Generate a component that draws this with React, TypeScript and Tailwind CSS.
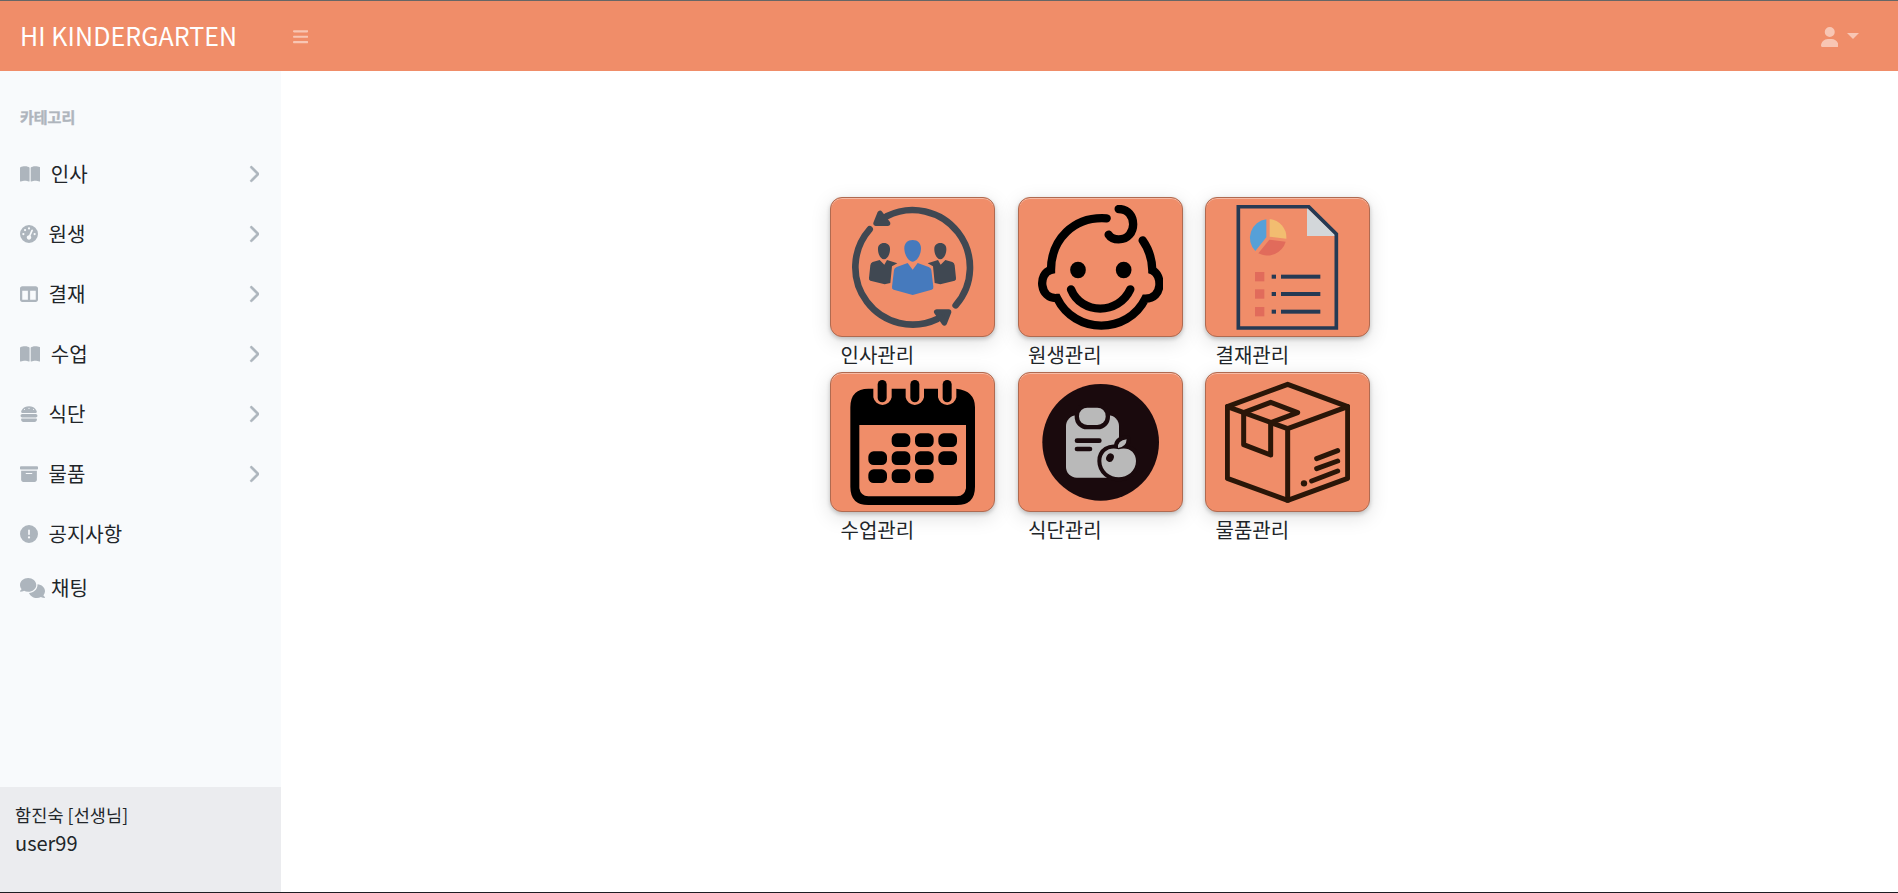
import React from "react";
import {
  FaBars, FaBookOpen, FaBoxArchive, FaBurger, FaChevronRight,
  FaCircleExclamation, FaComments, FaGaugeHigh, FaTableColumns, FaUser,
} from "react-icons/fa6";

type MenuItem = { label: string; icon: React.ReactNode; expandable?: boolean };

const menu: MenuItem[] = [
  { label: "인사", icon: <FaBookOpen className="h-[18px] w-[20.25px]" />, expandable: true },
  { label: "원생", icon: <FaGaugeHigh className="size-[18px]" />, expandable: true },
  { label: "결재", icon: <FaTableColumns className="size-[18px]" />, expandable: true },
  { label: "수업", icon: <FaBookOpen className="h-[18px] w-[20.25px]" />, expandable: true },
  { label: "식단", icon: <FaBurger className="size-[18px]" />, expandable: true },
  { label: "물품", icon: <FaBoxArchive className="size-[18px]" />, expandable: true },
  { label: "공지사항", icon: <FaCircleExclamation className="size-[18px]" /> },
];

function StaffIcon() {
  const dark = "#404852";
  return (
    <svg viewBox="90 45 375 375" className="size-[125px]">
      <g fill="none" stroke={dark} strokeWidth="20" strokeLinecap="round">
        <path d="M149 118A172 172 0 0 0 352 387" />
        <path d="M200 79A172 172 0 0 1 407 346" />
      </g>
      <g fill={dark} stroke={dark} strokeWidth="16" strokeLinejoin="round">
        <path d="M180 70L168 100H203Z" />
        <path d="M350 366H386L373 399Z" />
      </g>
      <g fill={dark}>
        <path d="M192 159C204 159 211 167 210 180C209 195 201 208 192 208C183 208 175 195 174 180C173 167 180 159 192 159Z" />
        <path d="M361 159C373 159 380 167 379 180C378 195 370 208 361 208C352 208 344 195 343 180C342 167 349 159 361 159Z" />
        <path d="M179 210L193 224L201 210L232 220L216 229L211 279L194 283L151 272Q146 270 147 264L151 226Q152 218 158 216Z" />
        <path d="M376 210L362 224L354 210L323 220L339 229L344 279L361 283L404 272Q409 270 408 264L404 226Q403 218 397 216Z" />
      </g>
      <g fill="#467abd">
        <path d="M278 150C294 150 304 161 303 177C302 196 290 215 278 215C266 215 254 196 253 177C252 161 262 150 278 150Z" />
        <path d="M263 219L278 239L293 219L326 231Q333 234 334 240L340 290Q341 297 335 299L278 315L221 299Q215 297 216 290L222 240Q223 234 230 231Z" />
      </g>
    </svg>
  );
}

function ChildIcon() {
  return (
    <svg viewBox="84 45 375 375" className="size-[125px]">
      <g fill="none" stroke="#000" strokeWidth="25" strokeLinecap="round" strokeLinejoin="miter">
        <path d="M290 85C190 78 123 150 123 240C83 249 88 328 141 324C194 434 353 434 406 326C460 326 457 253 427 241C426 202 413 172 398 151" />
        <path d="M326 57C384 57 384 148 326 148Q305 148 296 134" />
        <path d="M183 298C214 375 326 375 361 298" />
      </g>
      <ellipse cx="204" cy="240" rx="23.5" ry="25" />
      <ellipse cx="341" cy="240" rx="23.5" ry="25" />
    </svg>
  );
}

function ReportIcon() {
  return (
    <svg viewBox="90 45 375 375" className="size-[125px]">
      <path d="M336 53V138H424Z" fill="#d3d7da" />
      <path d="M130 50H341L424 132V414H130Z" fill="none" stroke="#253a54" strokeWidth="11" />
      <path d="M214 88A56 56 0 0 0 181 183L214 142Z" fill="#56a0d8" />
      <path d="M224 87A55 55 0 0 1 274 146L224 140Z" fill="#f2bd70" />
      <path d="M223 149L272 155A57 57 0 0 1 190 190Z" fill="#e16b5b" />
      {[260, 312, 365].map((y) => (
        <g key={y}>
          <rect x="180" y={y - 14} width="28" height="28" fill="#e16b5b" />
          <rect x="230" y={y - 6} width="13" height="12" fill="#253a54" />
          <rect x="258" y={y - 6} width="118" height="12" fill="#253a54" />
        </g>
      ))}
    </svg>
  );
}

const days = [
  [215, 205], [285, 205], [355, 205],
  [145, 259], [215, 259], [285, 259], [355, 259],
  [145, 313], [215, 313], [285, 313],
];

function CalendarIcon() {
  return (
    <svg viewBox="90 45 375 375" className="size-[125px]">
      <path
        fillRule="evenodd"
        d="M145 71H160V97A28 28 0 0 0 215 97V71H257V97A28 28 0 0 0 312 97V71H354V97A28 28 0 0 0 409 97V71Q465 77 465 127V365Q465 420 410 420H145Q91 420 91 365V127Q91 71 145 71ZM118 180V370Q122 393 145 394H411Q434 393 438 370V180Z"
      />
      {[173, 271, 368].map((x) => (
        <rect key={x} x={x} y="45" width="27" height="67" rx="13.5" />
      ))}
      {days.map(([x, y]) => (
        <rect key={x + "-" + y} x={x} y={y} width="56" height="41" rx="16" />
      ))}
    </svg>
  );
}

function MealIcon() {
  const dark = "#1a0a0d";
  const apple = "M326 253C300 244 274 259 274 288C274 318 301 337 326 337C352 337 378 318 378 288C378 259 352 244 326 253Z";
  return (
    <svg viewBox="84 45 375 375" className="size-[125px]">
      <circle cx="272" cy="232" r="175" fill={dark} />
      <rect x="168" y="151" width="159" height="187" rx="32" fill="#b9b9b9" />
      <rect x="194" y="115" width="106" height="78" rx="37" fill={dark} />
      <rect x="207" y="128" width="80" height="52" rx="25" fill="#b9b9b9" />
      <path d="M201 227H268M201 252H240" stroke={dark} strokeWidth="14" strokeLinecap="round" />
      <g fill={dark} stroke={dark} strokeWidth="24" strokeLinejoin="round">
        <path d={apple} />
        <path d="M324 249Q322 226 350 223Q349 246 324 249Z" />
      </g>
      <path d={apple} fill="#b9b9b9" />
      <path d="M324 249Q322 226 350 223Q349 246 324 249Z" fill="#b9b9b9" />
      <ellipse cx="300" cy="278" rx="11" ry="13" transform="rotate(28 300 278)" fill={dark} />
    </svg>
  );
}

function BoxIcon() {
  return (
    <svg viewBox="90 45 375 375" className="size-[125px]">
      <g fill="none" stroke="#2a1608" strokeWidth="15" strokeLinejoin="round" strokeLinecap="round">
        <path d="M278 58L458 125V340L278 406L97 340V125Z" />
        <path d="M97 125L278 191L458 125M278 191V406" />
        <path d="M146 143L227 112L308 143L227 173V270L146 239Z" />
        <path d="M365 281L428 257M365 311L428 288M350 348L428 318" />
      </g>
      <circle cx="327" cy="355" r="9.5" fill="#2a1608" />
    </svg>
  );
}

const cards = [
  { label: "인사관리", Icon: StaffIcon },
  { label: "원생관리", Icon: ChildIcon },
  { label: "결재관리", Icon: ReportIcon },
  { label: "수업관리", Icon: CalendarIcon },
  { label: "식단관리", Icon: MealIcon },
  { label: "물품관리", Icon: BoxIcon },
];

export default function App() {
  return (
    <div className="flex h-screen flex-col overflow-hidden border-t border-b border-t-[#666] border-b-[#1d1d22] bg-white font-['Noto_Sans_CJK_KR',sans-serif] text-xl leading-[30px] text-[#212529]">
      <header className="flex h-[70px] shrink-0 items-center bg-[#f08d69]">
        <h1 className="w-[292.5px] pb-0.5 pl-5 text-[25px] font-normal tracking-[0.08px] text-white">HI KINDERGARTEN</h1>
        <FaBars className="mt-px h-[17.5px] w-[15.3px] text-white/50" />
        <button className="mt-0.5 mr-[39px] ml-auto flex items-center gap-[9px] text-white/50">
          <FaUser className="h-5 w-[17.5px]" />
          <svg viewBox="0 0 12 6" className="mb-0.5 h-1.5 w-3" fill="currentColor">
            <path d="M0 0H12L6 6Z" />
          </svg>
        </button>
      </header>
      <div className="flex min-h-0 flex-1">
        <aside className="flex w-[281px] shrink-0 flex-col bg-[#f8fafc]">
          <div className="px-5 pt-[34px] pb-[15px] text-[15px] leading-[24px] font-bold text-[#afb5bd] [-webkit-text-stroke:0.4px_#afb5bd]">카테고리</div>
          <nav className="flex-1">
            {menu.map(({ label, icon, expandable }) => (
              <a key={label} className="flex h-[60px] items-center pr-[21px] pl-5">
                <span className="mr-[10.5px] text-[#adb5bd]">{icon}</span>
                {label}
                {expandable && (
                  <FaChevronRight className="mr-px ml-auto h-[18px] w-[11.25px] stroke-[#adb5bd] stroke-[14px] text-[#adb5bd]" />
                )}
              </a>
            ))}
            <a className="flex h-12 items-center pl-5">
              <FaComments className="mr-[6px] h-5 w-[25px] text-[#adb5bd]" />
              채팅
            </a>
          </nav>
          <footer className="h-[105px] bg-[#ebecef] px-[15px] pt-[15px]">
            <div className="text-[17.5px] leading-[26px] tracking-[0.1px]">함진숙 [선생님]</div>
            <div>user99</div>
          </footer>
        </aside>
        <main className="flex flex-1 justify-center pt-[126px] pl-[21px]">
          <div className="grid h-fit grid-cols-[repeat(3,165px)] gap-x-[22.5px]">
            {cards.map(({ label, Icon }) => (
              <section key={label} className="h-[175px]">
                <button className="flex h-[140px] w-[165px] items-center justify-center rounded-[12px] border border-[#b06a50] bg-[#f08d69] shadow-[0_2px_4px_rgba(0,0,0,0.2),0_5px_20px_rgba(0,0,0,0.13),inset_0_1px_0_rgba(255,255,255,0.4)]">
                  <Icon />
                </button>
                <div className="pt-[3px] pl-[10.5px]">{label}</div>
              </section>
            ))}
          </div>
        </main>
      </div>
    </div>
  );
}
